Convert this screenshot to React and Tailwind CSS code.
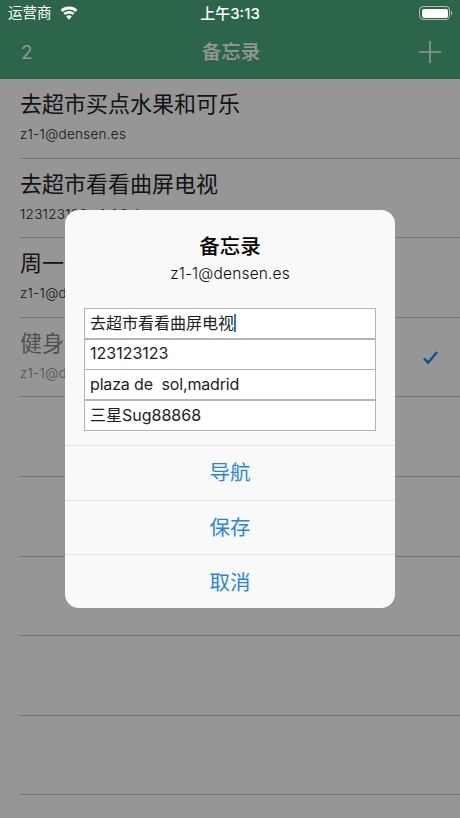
const font = { fontFamily: '"Inter","Noto Sans CJK SC",sans-serif' };

const rows = [
  { t: "去超市买点水果和可乐", s: "z1-1@densen.es" },
  { t: "去超市看看曲屏电视", s: "123123123   z1-1@densen.es" },
  { t: "周一去健身房", s: "z1-1@densen.es" },
  { t: "健身房", s: "z1-1@densen.es", done: true },
  {}, {}, {}, {}, {},
];

const fields = ["去超市看看曲屏电视", "123123123", "plaza de\u00a0\u00a0sol,madrid", "三星Sug88868"];

function Row({ r }) {
  return (
    <div className="relative h-[79.6px] ml-5 border-b border-[#c6c6c6]">
      {r.t && (
        <div className="pt-[11px]">
          <div className={`text-[22px] leading-[28px] ${r.done ? "text-[#8a8a8a]" : "text-[#222222]"}`}>{r.t}</div>
          <div className={`mt-[7px] text-[13.5px] leading-[18px] tracking-[0.02em] font-light ${r.done ? "text-[#8a8a8a]" : "text-[#222222]"}`}>{r.s}</div>
        </div>
      )}
      {r.done && (
        <svg className="absolute right-[21px] top-[32px]" width="17" height="15" viewBox="0 0 17 15" fill="none">
          <path d="M2 8.5 L6.2 12.7 L15 2" stroke="#1a84ff" strokeWidth="2.4" />
        </svg>
      )}
    </div>
  );
}

export default function App() {
  return (
    <div className="relative w-[460px] h-[818px] overflow-hidden bg-white" style={font}>
      <div className="h-[79px] bg-[#4bac7f]">
        <div className="relative z-20 h-[26px] flex items-center px-2 text-white">
          <span className="text-[14.5px] leading-none">运营商</span>
          <svg className="ml-2 -mt-[1px]" width="18" height="14" viewBox="0 0 18 14" fill="white">
            <path d="M9 13.8 L6.2 10.4 A4.4 4.4 0 0 1 11.8 10.4 Z" />
            <path d="M5.1 9.1 L3.5 7.1 A8.4 8.4 0 0 1 14.5 7.1 L12.9 9.1 A5.9 5.9 0 0 0 5.1 9.1 Z" />
            <path d="M2.5 5.9 L0.6 3.8 A12.6 12.6 0 0 1 17.4 3.8 L15.5 5.9 A9.8 9.8 0 0 0 2.5 5.9 Z" />
          </svg>
          <span className="absolute left-0 right-0 text-center text-[15px] font-medium leading-none">上午3:13</span>
          <div className="ml-auto flex items-center">
            <div className="w-[31px] h-[14px] rounded-[4px] border border-white/60 p-[1.5px]">
              <div className="w-full h-full rounded-[2px] bg-white" />
            </div>
            <div className="ml-[1px] w-[1px] h-[4px] bg-white/60" />
          </div>
        </div>
        <div className="flex items-center justify-between h-[53px] pl-[21px] pr-[19px] text-white">
          <span className="text-[19px] leading-none w-[40px]">2</span>
          <span className="text-[19.5px] font-medium leading-none">备忘录</span>
          <div className="w-[40px] flex justify-end -mt-[2px]">
            <svg width="22" height="22" viewBox="0 0 22 22" stroke="white" strokeWidth="1.6">
              <path d="M11 0V22M0 11H22" />
            </svg>
          </div>
        </div>
      </div>

      {rows.map((r, i) => (
        <Row key={i} r={r} />
      ))}

      <div className="absolute inset-0 z-10 bg-black/[0.41]" />

      <div className="absolute z-20 left-[65px] top-[210px] w-[330px] h-[398px] rounded-[14px] bg-[#f9f9f9] flex flex-col">
        <div className="pt-[24px] text-center">
          <div className="text-[20.5px] font-medium leading-[26px] text-black">备忘录</div>
          <div className="mt-[3px] text-[15.5px] leading-[22px] font-light text-[#0c0c0c] tracking-[0.01em]">z1-1@densen.es</div>
        </div>
        <div className="mt-[23px] mx-[19px] flex flex-col">
          {fields.map((f, i) => (
            <div
              key={i}
              className={`flex items-center h-[31px] bg-white border border-[#b4b4b4] pl-[5px] pb-[2px] text-[16px] text-[#1c1c1c] ${i ? "-mt-[0.33px]" : ""}`}
            >
              <span className={`leading-none ${i === 2 ? "tracking-[-0.01em]" : ""}`}>{f}</span>
              {i === 0 && <span className="w-[2px] h-[18px] bg-[#3b6fe0]" />}
            </div>
          ))}
        </div>
        <div className="mt-[14px] flex flex-col text-[20.5px] text-[#2a84e8] text-center">
          {["导航", "保存", "取消"].map((b) => (
            <div key={b} className="h-[54.6px] border-t border-[#e4e4e4] flex items-center justify-center pt-[2px]">
              {b}
            </div>
          ))}
        </div>
      </div>
    </div>
  );
}
